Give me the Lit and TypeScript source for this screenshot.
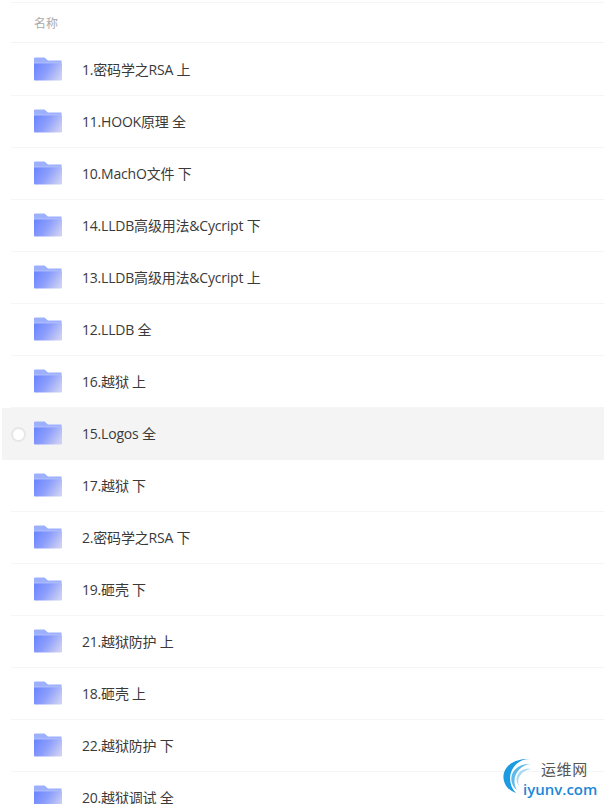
import { LitElement, html, css, svg } from "lit";
import { customElement } from "lit/decorators.js";

const rows = [
  "1.密码学之RSA 上", "11.HOOK原理 全", "10.MachO文件 下", "14.LLDB高级用法&Cycript 下",
  "13.LLDB高级用法&Cycript 上", "12.LLDB 全", "16.越狱 上", "15.Logos 全", "17.越狱 下",
  "2.密码学之RSA 下", "19.砸壳 下", "21.越狱防护 上", "18.砸壳 上", "22.越狱防护 下", "20.越狱调试 全",
];

const folder = (i: number) => svg`<svg class="folder" width="28" height="24" viewBox="0 0 28 24">
  <defs>
    <linearGradient id="b${i}" x1="0" y1="0.3" x2="1" y2="0.7"><stop offset="0" stop-color="#7088ff"/><stop offset="0.45" stop-color="#8d9ffb"/><stop offset="1" stop-color="#cdd0f3"/></linearGradient>
  </defs>
  <path d="M1 0.5H10.5L14 3.5H27.5V8H0V1.5Q0 .5 1 .5Z" fill="#9db0fd"/>
  <path d="M0 5.5H28V6.5H0Z" fill="#b7c4fb"/>
  <path d="M0 6.5H28V22.5Q28 23.5 27 23.5H1Q0 23.5 0 22.5Z" fill="url(#b${i})"/>
</svg>`;

@customElement("app-root")
export class AppRoot extends LitElement {
  static styles = css`
    :host { display: block; width: 604px; height: 804px; overflow: hidden; background: #fff; position: relative;
      font-family: "Open Sans", "Noto Sans CJK SC", sans-serif; }
    .list { padding-top: 2px; margin-left: 11px; }
    .head { height: 39px; display: flex; align-items: center; padding-left: 23px; font-size: 12px; color: #aaa;
      border-top: 1px solid #f5f5f5; border-bottom: 1px solid #f3f3f3; }
    .row { height: 51px; border-bottom: 1px solid #f5f5f5; display: flex; align-items: center; position: relative; font-size: 14px; color: #3a3a3a; }
    .head + .row { padding-top: 1px; }
    .row.hover { background: #f4f4f4; margin-left: -9px; padding-left: 9px; border-bottom-color: #f4f4f4; }
    .folder { margin-left: 23px; margin-right: 20px; margin-top: -2px; flex: none; }
    .row span { white-space: pre; letter-spacing: -0.2px; margin-top: -2px; }
    .radio { position: absolute; left: 9px; top: 50%; width: 11px; height: 11px; margin-top: -7px; border: 2px solid #e6e6e6; border-radius: 50%; background: #fff; }
    .logo { position: absolute; left: 500px; top: 756px; width: 104px; height: 48px; }
    .logo svg { position: absolute; left: 0; top: 0; }
    .cn { position: absolute; left: 41px; top: 4px; font-size: 15px; line-height: 18px; letter-spacing: 0.6px; color: #555; white-space: nowrap; font-family: "Noto Sans CJK SC", sans-serif; }
    .en { position: absolute; left: 23px; top: 24px; font-size: 15px; line-height: 18px; font-weight: 600; color: #1b87d8; white-space: nowrap; font-family: "Open Sans", sans-serif; }
  `;

  render() {
    return html`
      <div class="list">
        <div class="head">名称</div>
        ${rows.map((t, i) => html`<div class="row ${i === 7 ? "hover" : ""}">
          ${i === 7 ? html`<div class="radio"></div>` : ""}
          ${folder(i)}
          <span>${t}</span>
        </div>`)}
      </div>
      <div class="logo">
        <svg width="40" height="48" viewBox="0 0 40 48" fill="none">
          <path d="M16 37C-3 31 -2 2 30 3C11 3 4 25 16 37Z" fill="#1b9be0"/>
          <path d="M17 34C6 26 11 7 31 8C18 9 10 23 17 34Z" fill="#5cb9ea"/>
          <path d="M19 30C13 22 19 11 31 13C22 14 16 22 19 30Z" fill="#a8d9f3"/>
        </svg>
        <div class="cn">运维网</div>
        <div class="en">iyunv.com</div>
      </div>
    `;
  }
}
